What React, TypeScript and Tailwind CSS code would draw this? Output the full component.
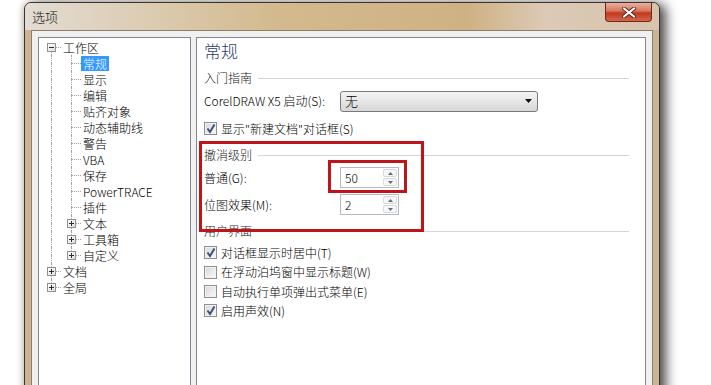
import React from 'react';

type Cell = { up?: boolean; down?: boolean; right?: boolean; box?: '+' | '-' };
type TreeRow = { label: string; cells: Cell[]; selected?: boolean };

const PIPE: Cell = { up: true, down: true };
const TEE: Cell = { up: true, down: true, right: true };

const treeRows: TreeRow[] = [
  { label: '工作区', cells: [{ down: true, right: true, box: '-' }] },
  { label: '常规', cells: [PIPE, TEE], selected: true },
  { label: '显示', cells: [PIPE, TEE] },
  { label: '编辑', cells: [PIPE, TEE] },
  { label: '贴齐对象', cells: [PIPE, TEE] },
  { label: '动态辅助线', cells: [PIPE, TEE] },
  { label: '警告', cells: [PIPE, TEE] },
  { label: 'VBA', cells: [PIPE, TEE] },
  { label: '保存', cells: [PIPE, TEE] },
  { label: 'PowerTRACE', cells: [PIPE, TEE] },
  { label: '插件', cells: [PIPE, TEE] },
  { label: '文本', cells: [PIPE, { ...TEE, box: '+' }] },
  { label: '工具箱', cells: [PIPE, { ...TEE, box: '+' }] },
  { label: '自定义', cells: [PIPE, { up: true, right: true, box: '+' }] },
  { label: '文档', cells: [{ ...TEE, box: '+' }] },
  { label: '全局', cells: [{ up: true, right: true, box: '+' }] },
];

function TreeCell({ cell }: { cell: Cell }) {
  return (
    <div className="relative w-[20px] h-[16px] shrink-0">
      {cell.up && <div className="absolute left-[10px] top-0 h-[8px] border-l border-dotted border-[#a0a0a0]" />}
      {cell.down && <div className="absolute left-[10px] top-[8px] h-[8px] border-l border-dotted border-[#a0a0a0]" />}
      {cell.right && <div className="absolute left-[11px] right-0 top-[8px] border-t border-dotted border-[#a0a0a0]" />}
      {cell.box && (
        <div className="absolute left-[6px] top-[4px] w-[9px] h-[9px] border border-[#919191] bg-[linear-gradient(135deg,#ffffff,#dedede)]">
          <div className="absolute left-[1px] top-[3px] w-[5px] border-t border-[#2d2d2d]" />
          {cell.box === '+' && <div className="absolute left-[3px] top-[1px] h-[5px] border-l border-[#2d2d2d]" />}
        </div>
      )}
    </div>
  );
}

function CheckBox({ checked }: { checked?: boolean }) {
  return (
    <span className="relative inline-block w-[13px] h-[13px] shrink-0 border border-[#8e8f8f] bg-[linear-gradient(135deg,#d6d6d6,#fafafa)] shadow-[inset_0_0_0_1px_#f2f2f2]">
      {checked && (
        <svg className="absolute left-[1px] top-[0px]" width="10" height="11" viewBox="0 0 10 11">
          <path d="M1.5 5.5 L4 9 L8.5 1.5" fill="none" stroke="#3f4f7d" strokeWidth="2" />
        </svg>
      )}
    </span>
  );
}

function CheckRow({ checked, label }: { checked?: boolean; label: string }) {
  return (
    <div className="flex items-center gap-[4px] h-[19.3px]">
      <CheckBox checked={checked} />
      <span>{label}</span>
    </div>
  );
}

function GroupLabel({ text }: { text: string }) {
  return (
    <div className="flex items-center h-[16px] pr-[16px]">
      <span className="text-[#1a1a1a]">{text}</span>
      <div className="flex-1 ml-[6px] border-t border-[#d4d4d4]" />
    </div>
  );
}

function Spinner({ value }: { value: string }) {
  return (
    <div className="flex w-[59px] h-[21px] border border-[#b6b9c0] bg-white">
      <div className="flex-1 pl-[4px] leading-[19px]">{value}</div>
      <div className="w-[16px] flex flex-col gap-[1px] p-[1px]">
        <div className="flex-1 flex items-center justify-center border border-[#d6d9de] bg-[#f7f7f7] rounded-[2px]">
          <svg width="5" height="3" viewBox="0 0 5 3"><path d="M0 3 L2.5 0 L5 3 Z" fill="#5b6b84" /></svg>
        </div>
        <div className="flex-1 flex items-center justify-center border border-[#d6d9de] bg-[#f7f7f7] rounded-[2px]">
          <svg width="5" height="3" viewBox="0 0 5 3"><path d="M0 0 L2.5 3 L5 0 Z" fill="#5b6b84" /></svg>
        </div>
      </div>
    </div>
  );
}

export default function App() {
  return (
    <div className="relative h-[385px] w-[711px] overflow-hidden bg-white font-['Noto_Sans_CJK_SC','Noto_Sans',sans-serif] font-light text-[12px] text-black">
      <div className="ml-[24px] mt-[2px] w-[636px] h-[440px] flex flex-col rounded-t-[7px] border border-[#3e342a] bg-[#cbb393] px-[6px] shadow-[6px_2px_12px_rgba(0,0,0,0.7),-2px_0_6px_rgba(0,0,0,0.15)]">
        <div className="-mx-[6px] px-[6px] h-[27px] flex justify-between items-start rounded-t-[6px] bg-[linear-gradient(90deg,#e3dcd3_0%,#dccdb4_18%,#d3b98d_40%,#cfb284_70%,#dccab6_82%,#d8c3ad_100%)]">
          <span className="pt-[6px] pl-[1px] text-[13px] leading-[16px] text-[#111]">选项</span>
          <div className="mr-[1px] w-[47px] h-[19px] flex items-center justify-center rounded-b-[4px] border border-t-0 border-[#6b2a1e] bg-[linear-gradient(180deg,#eab0a0_0%,#d7745c_45%,#c0391f_55%,#d5654a_100%)]">
            <svg width="14" height="11" viewBox="0 0 14 11">
              <path d="M2 1.5 L12 9.5 M12 1.5 L2 9.5" stroke="#5a2a20" strokeWidth="4" strokeLinecap="round" />
              <path d="M2 1.5 L12 9.5 M12 1.5 L2 9.5" stroke="#ffffff" strokeWidth="2.2" strokeLinecap="round" />
            </svg>
          </div>
        </div>

        <div className="flex-1 flex gap-[5px] border border-[#8d7f6d] bg-[#f0f0f0] p-[6px]">
          <div className="w-[153px] border border-[#828790] bg-white pl-[2px] pt-[1px]">
            {treeRows.map((row) => (
              <div key={row.label} className="flex items-center h-[16px]">
                {row.cells.map((c, i) => (
                  <TreeCell key={i} cell={c} />
                ))}
                <span
                  className={
                    row.selected
                      ? 'px-[2px] leading-[15px] bg-[#3399ff] text-white'
                      : 'px-[2px] leading-[15px]'
                  }
                >
                  {row.label}
                </span>
              </div>
            ))}
          </div>

          <div className="flex-1 border border-[#828790] bg-white pl-[7px] pt-[2px]">
            <div className="text-[17px] leading-[22px] text-[#1f3b70]">常规</div>
            <div className="mt-[8px]">
              <GroupLabel text="入门指南" />
            </div>
            <div className="mt-[5px] flex items-center h-[20px]">
              <span className="w-[136px]">CorelDRAW X5 启动(S):</span>
              <div className="w-[198px] h-[21px] flex items-center justify-between rounded-[3px] border border-[#7a7a7a] bg-[linear-gradient(180deg,#f4f4f4,#e6e6e6_50%,#d8d8d8)] pl-[4px] pr-[5px]">
                <span className="text-[13px]">无</span>
                <svg width="7" height="4" viewBox="0 0 7 4"><path d="M0 0 L7 0 L3.5 4 Z" fill="#111" /></svg>
              </div>
            </div>
            <div className="mt-[8px]">
              <CheckRow checked label={'显示"新建文档"对话框(S)'} />
            </div>
            <div className="mt-[9px]">
              <GroupLabel text="撤消级别" />
            </div>
            <div className="mt-[4px] flex items-center h-[21px]">
              <span className="w-[136px]">普通(G):</span>
              <Spinner value="50" />
            </div>
            <div className="mt-[6px] flex items-center h-[21px]">
              <span className="w-[136px]">位图效果(M):</span>
              <Spinner value="2" />
            </div>
            <div className="mt-[8px]">
              <GroupLabel text="用户界面" />
            </div>
            <div className="mt-[4px]">
              <CheckRow checked label="对话框显示时居中(T)" />
              <CheckRow label="在浮动泊坞窗中显示标题(W)" />
              <CheckRow label="自动执行单项弹出式菜单(E)" />
              <CheckRow checked label="启用声效(N)" />
            </div>
          </div>
        </div>
      </div>

      <div className="absolute left-[199px] top-[141px] w-[225px] h-[91px] border-[3px] border-[#c0141b]" />
      <div className="absolute left-[328px] top-[160px] w-[79px] h-[33px] border-[3px] border-[#c0141b]" />
    </div>
  );
}
